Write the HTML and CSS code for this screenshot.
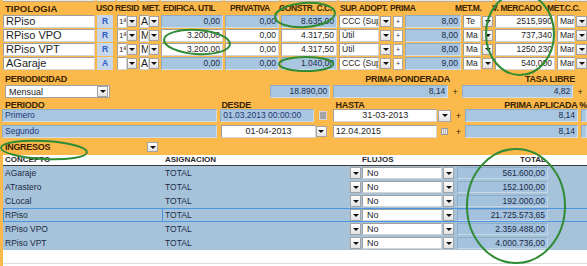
FILE: index.html
```html
<!DOCTYPE html>
<html lang="es">
<head>
    <meta charset="UTF-8">
    <meta name="viewport" content="width=device-width, initial-scale=1.0">
    <title>Tipologías</title>
    <link rel="stylesheet" href="styles.css">
</head>
<body>
<div class="page">
    <div class="top-strip">
        <div></div><div></div><div></div><div></div><div></div><div></div>
        <div></div><div></div><div></div><div></div><div></div><div></div>
    </div>

    <div class="tipo-head">
        <span class="h-tipo">TIPOLOGIA</span>
        <span class="h-uso">USO</span>
        <span class="h-res">RESID</span>
        <span class="h-met">MET.</span>
        <span class="h-edi">EDIFICA. UTIL</span>
        <span class="h-pri">PRIVATIVA</span>
        <span class="h-con">CONSTR. C.C.</span>
        <span class="h-sup">SUP. ADOPT.</span>
        <span class="h-pma">PRIMA</span>
        <span class="h-mm">MET.M.</span>
        <span class="h-vm">V. MERCADO</span>
        <span class="h-mc">MET.C.C.</span>
    </div>

    <div class="tipo-grid">
        <!-- RPiso -->
        <div class="fld white big">RPiso</div>
        <div class="uso">R</div>
        <div class="sel sm"><span class="fld white">1ª</span><span class="btn"></span></div>
        <div class="sel sm"><span class="fld white big">A</span><span class="btn"></span></div>
        <div class="fld blue num">0,00</div>
        <div class="fld blue num">0,00</div>
        <div class="fld blue num">8.635,00</div>
        <div class="sel"><span class="fld white">CCC (Supe</span><span class="btn"></span></div>
        <div class="prima"><span class="plus">+</span><span class="fld blue num">8,00</span></div>
        <div class="sel"><span class="fld white">Te</span><span class="btn"></span></div>
        <div class="fld white num">2515,990</div>
        <div class="sel"><span class="fld white">Manu</span><span class="btn"></span></div>

        <!-- RPiso VPO -->
        <div class="fld white big">RPiso VPO</div>
        <div class="uso">R</div>
        <div class="sel sm"><span class="fld white">1ª</span><span class="btn"></span></div>
        <div class="sel sm"><span class="fld white big">M</span><span class="btn"></span></div>
        <div class="fld white num">3.200,00</div>
        <div class="fld white num">0,00</div>
        <div class="fld white num">4.317,50</div>
        <div class="sel"><span class="fld white">Útil</span><span class="btn"></span></div>
        <div class="prima"><span class="plus">+</span><span class="fld blue num">8,00</span></div>
        <div class="sel"><span class="fld white">Ma</span><span class="btn"></span></div>
        <div class="fld white num">737,340</div>
        <div class="sel"><span class="fld white">Manu</span><span class="btn"></span></div>

        <!-- RPiso VPT -->
        <div class="fld white big">RPiso VPT</div>
        <div class="uso">R</div>
        <div class="sel sm"><span class="fld white">1ª</span><span class="btn"></span></div>
        <div class="sel sm"><span class="fld white big">M</span><span class="btn"></span></div>
        <div class="fld white num">3.200,00</div>
        <div class="fld white num">0,00</div>
        <div class="fld white num">4.317,50</div>
        <div class="sel"><span class="fld white">Útil</span><span class="btn"></span></div>
        <div class="prima"><span class="plus">+</span><span class="fld blue num">8,00</span></div>
        <div class="sel"><span class="fld white">Ma</span><span class="btn"></span></div>
        <div class="fld white num">1250,230</div>
        <div class="sel"><span class="fld white">Manu</span><span class="btn"></span></div>

        <!-- AGaraje -->
        <div class="fld white big">AGaraje</div>
        <div class="uso">A</div>
        <div class="sel sm"><span class="fld white"></span><span class="btn"></span></div>
        <div class="sel sm"><span class="fld white big">A</span><span class="btn"></span></div>
        <div class="fld blue num">0,00</div>
        <div class="fld blue num">0,00</div>
        <div class="fld blue num">1.040,00</div>
        <div class="sel"><span class="fld white">CCC (Supe</span><span class="btn"></span></div>
        <div class="prima"><span class="plus">+</span><span class="fld blue num">9,00</span></div>
        <div class="sel"><span class="fld white">Ma</span><span class="btn"></span></div>
        <div class="fld white num">540,000</div>
        <div class="sel"><span class="fld white">Manu</span><span class="btn"></span></div>
    </div>

    <div class="lbl-row lbl-1">
        <span class="l-per">PERIODICIDAD</span>
        <span class="l-pp">PRIMA PONDERADA</span>
        <span class="l-tl">TASA LIBRE</span>
    </div>
    <div class="form-row row-b">
        <div class="combo mensual"><span>Mensual</span><span class="btn"></span></div>
        <div class="fld blue num w-tot">18.890,00</div>
        <div class="fld blue num w-pp">8,14</div>
        <span class="op">+</span>
        <div class="fld blue num w-tasa">4,82</div>
        <span class="op">+</span>
    </div>

    <div class="lbl-row lbl-2">
        <span class="l-periodo">PERIODO</span>
        <span class="l-desde">DESDE</span>
        <span class="l-hasta">HASTA</span>
        <span class="l-pa">PRIMA APLICADA %</span>
    </div>
    <div class="form-row row-d">
        <div class="fld blue dark w-per">Primero</div>
        <div class="fld blue dark w-desde">01.03.2013 00:00:00</div>
        <span class="chk"></span>
        <div class="fld white center w-hasta">31-03-2013</div>
        <span class="btn big-btn"></span>
        <span class="op">+</span>
        <div class="fld blue num w-tasa">8,14</div>
        <div class="fld blue stub"></div>
    </div>
    <div class="form-row row-e">
        <div class="fld blue dark w-per">Segundo</div>
        <div class="fld white center w-desde2">01-04-2013</div>
        <span class="btn"></span>
        <div class="fld white w-hasta2">12.04.2015</div>
        <span class="cal"></span>
        <span class="op">+</span>
        <div class="fld blue num w-tasa">8,14</div>
        <div class="fld blue stub"></div>
    </div>

    <div class="form-row row-f">
        <span class="l-ing">INGRESOS</span>
        <span class="btn"></span>
    </div>

    <div class="ing-table">
        <div class="ing-grid ing-head">
            <span class="c-con">CONCEPTO</span>
            <span class="c-asig">ASIGNACION</span>
            <span></span>
            <span class="c-flu">FLUJOS</span>
            <span></span>
            <span class="c-tot">TOTAL</span>
            <span></span>
        </div>
        <div class="ing-grid ing-row">
            <span class="c-con">AGaraje</span><span class="c-asig">TOTAL</span>
            <span class="btn"></span><span class="fld white no">No</span><span class="btn"></span>
            <span class="tot">561.600,00</span><span></span>
        </div>
        <div class="ing-grid ing-row">
            <span class="c-con">ATrastero</span><span class="c-asig">TOTAL</span>
            <span class="btn"></span><span class="fld white no">No</span><span class="btn"></span>
            <span class="tot">152.100,00</span><span></span>
        </div>
        <div class="ing-grid ing-row">
            <span class="c-con">CLocal</span><span class="c-asig">TOTAL</span>
            <span class="btn"></span><span class="fld white no">No</span><span class="btn"></span>
            <span class="tot">192.000,00</span><span></span>
        </div>
        <div class="ing-grid ing-row current">
            <span class="c-con">RPiso</span><span class="c-asig">TOTAL</span>
            <span class="btn"></span><span class="fld white no">No</span><span class="btn"></span>
            <span class="tot">21.725.573,65</span><span></span>
        </div>
        <div class="ing-grid ing-row">
            <span class="c-con">RPiso VPO</span><span class="c-asig">TOTAL</span>
            <span class="btn"></span><span class="fld white no">No</span><span class="btn"></span>
            <span class="tot">2.359.488,00</span><span></span>
        </div>
        <div class="ing-grid ing-row">
            <span class="c-con">RPiso VPT</span><span class="c-asig">TOTAL</span>
            <span class="btn"></span><span class="fld white no">No</span><span class="btn"></span>
            <span class="tot">4.000.736,00</span><span></span>
        </div>
        <div class="ing-foot"></div>
    </div>

    <!-- marcas verdes sobre la captura -->
    <svg class="marks" width="587" height="266" viewBox="0 0 587 266">
        <g fill="none" stroke="#2f8b34" stroke-width="2">
            <ellipse cx="305" cy="15" rx="30" ry="12" transform="rotate(-4 305 15)"/>
            <ellipse cx="197" cy="42" rx="33" ry="12" transform="rotate(4 197 42)"/>
            <ellipse cx="306" cy="64" rx="27" ry="7"/>
            <ellipse cx="520" cy="34" rx="34" ry="41"/>
            <ellipse cx="44" cy="150" rx="43" ry="9" transform="rotate(3 44 150)"/>
            <ellipse cx="516" cy="206" rx="49" ry="57"/>
        </g>
    </svg>
</div>
</body>
</html>
```

FILE: styles.css
```css
body {
    margin: 0;
    font-family: "Liberation Sans", Arial, sans-serif;
    font-size: 9px;
    color: #222;
    background: #fbb94c;
}
.page {
    position: relative;
    width: 587px;
    height: 266px;
    overflow: hidden;
}

/* tabla de tipologias */
.top-strip, .tipo-grid {
    display: grid;
    grid-template-columns: 92px 18px 20px 20px 62px 54px 56px 52px 68px 30px 60px 30px;
    column-gap: 2px;
    padding-left: 3px;
}
.top-strip {
    height: 2px;
}
.top-strip div {
    box-sizing: border-box;
    background: #eee8dc;
    border-bottom: 1px solid #b7ab93;
}
.tipo-head {
    display: flex;
    height: 12px;
    margin-bottom: 1px;
    align-items: flex-end;
    font-weight: bold;
    font-size: 8.5px;
    letter-spacing: -0.4px;
    color: #3a2300;
    white-space: nowrap;
}
.tipo-head span {
    display: block;
    box-sizing: border-box;
    line-height: 11px;
}
.h-tipo { width: 96px; padding-left: 5px; letter-spacing: 0; font-size: 9.5px; }
.h-uso { width: 19px; }
.h-res { width: 27px; }
.h-met { width: 21px; }
.h-edi { width: 67px; }
.h-pri { width: 49px; }
.h-con { width: 61px; }
.h-sup { width: 50px; }
.h-pma { width: 65px; }
.h-mm { width: 37px; }
.h-vm { width: 55px; }
.h-mc { width: 37px; }

.tipo-grid {
    row-gap: 1px;
    grid-auto-rows: 13px;
}

.fld {
    display: block;
    box-sizing: border-box;
    height: 13px;
    border: 1px solid;
    padding: 0 2px;
    font-size: 8.5px;
    line-height: 11px;
    overflow: hidden;
    white-space: nowrap;
}
.fld.white {
    background: #fff;
    border-color: #9f9f9f #d4d4d4 #d4d4d4 #9f9f9f;
    color: #1e1e1e;
}
.fld.blue {
    background: #a9c6e0;
    border-color: #8eaac4 #d0dce8 #d0dce8 #8eaac4;
    color: #1c2a48;
}
.fld.big {
    font-size: 11px;
    padding-left: 2px;
}
.num {
    text-align: right;
}
.center {
    text-align: center;
}
.uso {
    background: #c7d6e9;
    color: #2b5fc8;
    font-weight: bold;
    font-size: 8.5px;
    line-height: 13px;
    text-align: center;
    margin-right: 2px;
}
.sel {
    display: flex;
    align-items: center;
    gap: 1px;
}
.sel .fld {
    flex: 1;
    min-width: 0;
}
.sel.sm {
    gap: 0;
}
.sel.sm .fld {
    padding: 0 0 0 1px;
    font-size: 8px;
}
.sel.sm .fld.big {
    font-size: 10.5px;
}
.sel.sm .btn {
    width: 10px;
}
.btn {
    box-sizing: border-box;
    flex: none;
    display: flex;
    align-items: center;
    justify-content: center;
    width: 11px;
    height: 11px;
    background: linear-gradient(#ffffff, #e2e2e2);
    border: 1px solid #a3a3a3;
}
.btn::after {
    content: "";
    border-left: 3px solid transparent;
    border-right: 3px solid transparent;
    border-top: 3px solid #111;
}
.prima {
    display: flex;
    align-items: center;
    gap: 2px;
}
.prima .fld {
    flex: 1;
}
.plus {
    box-sizing: border-box;
    width: 10px;
    height: 12px;
    background: #fff;
    border: 1px solid #a8a8a8;
    font-size: 7px;
    line-height: 10px;
    text-align: center;
    color: #333;
}

/* periodicidad y periodos */
.lbl-row {
    display: flex;
    font-weight: bold;
    font-size: 9px;
    letter-spacing: -0.3px;
    color: #3a2300;
    white-space: nowrap;
}
.lbl-row span {
    display: block;
    box-sizing: border-box;
}
.lbl-1 {
    margin-top: 3px;
    height: 11px;
    line-height: 13px;
}
.l-per { width: 200px; padding-left: 5px; }
.l-pp { width: 250px; text-align: right; }
.l-tl { width: 125px; text-align: right; }

.form-row {
    display: flex;
    align-items: center;
    height: 13px;
}
.row-b {
    margin-top: 1px;
}
.combo {
    box-sizing: border-box;
    display: flex;
    align-items: center;
    justify-content: space-between;
    height: 13px;
    padding: 0 1px 0 3px;
    background: #fff;
    border: 1px solid #9f9f9f;
    font-size: 9px;
    color: #222;
}
.mensual {
    margin-left: 5px;
    width: 107px;
}
.w-tot { margin-left: 160px; width: 61px; }
.w-pp { margin-left: 3px; width: 117px; }
.w-tasa { width: 113px; }
.op {
    width: 14px;
    text-align: center;
    font-size: 9px;
    color: #3a2300;
}

.lbl-2 {
    height: 10px;
    line-height: 12px;
    margin-top: 1px;
}
.l-periodo { width: 223px; padding-left: 5px; }
.l-desde { width: 115px; }
.l-hasta { width: 170px; }
.l-pa { flex: 1; }

.fld.dark {
    color: #1d3574;
    font-size: 8.5px;
}
.w-per { margin-left: 2px; width: 216px; }
.w-desde { margin-left: 3px; width: 94px; }
.chk {
    margin-left: 5px;
    width: 8px;
    height: 9px;
    background: #a3a3a8;
    border: 1px solid #d8d8d8;
    box-sizing: border-box;
}
.w-hasta { margin-left: 6px; width: 105px; font-size: 9px; }
.big-btn {
    margin-left: 1px;
    width: 13px;
    height: 12px;
}
.stub {
    margin-left: 3px;
    width: 4px;
}
.row-e {
    margin-top: 3px;
}
.w-desde2 { margin-left: 4px; width: 95px; font-size: 9px; }
.w-hasta2 { margin-left: 6px; width: 105px; font-size: 9px; }
.cal {
    box-sizing: border-box;
    margin: 0 3px 0 4px;
    width: 7px;
    height: 7px;
    border: 1px solid #9a9a9a;
    background: repeating-linear-gradient(90deg, #e8e8e8 0 1px, #b8b8b8 1px 2px);
}

.row-f {
    margin-top: 2px;
    height: 14px;
}
.l-ing {
    box-sizing: border-box;
    width: 147px;
    padding-left: 5px;
    font-weight: bold;
    font-size: 9px;
    letter-spacing: -0.3px;
    color: #3a2300;
}
.row-f .btn {
    width: 11px;
    height: 10px;
}

/* tabla de ingresos */
.ing-table {
    margin-left: 3px;
    margin-top: 1px;
    background: #fff;
    height: 111px;
}
.ing-grid {
    display: grid;
    grid-template-columns: 160px 187px 12px 81px 13px 92px 1fr;
    align-items: center;
}
.ing-head {
    height: 10px;
    border-bottom: 1px solid #3a3a3a;
    font-weight: bold;
    font-size: 8px;
    color: #2a2a2a;
    line-height: 10px;
}
.c-con, .c-asig {
    padding-left: 2px;
    white-space: nowrap;
}
.c-tot {
    text-align: right;
    padding-right: 2px;
}
.ing-row {
    height: 14px;
    background: #a7c3da;
    font-size: 8.5px;
    color: #1b2a44;
}
.ing-row .c-con, .ing-row .c-asig {
    line-height: 14px;
    height: 14px;
    box-sizing: border-box;
}
.ing-row .no {
    height: 12px;
    line-height: 10px;
    margin-right: 1px;
    font-size: 9px;
    padding-left: 4px;
}
.ing-row .btn {
    width: 11px;
    height: 12px;
}
.tot {
    box-sizing: border-box;
    margin-left: 1px;
    height: 12px;
    line-height: 10px;
    padding-right: 2px;
    text-align: right;
    background: #a4c2de;
    border: 1px solid #c5d7e7;
    border-left-color: #8cacc8;
    border-top-color: #8cacc8;
}
.ing-row.current {
    box-shadow: inset 0 1px 0 #4b94e4, inset 0 -1px 0 #4b94e4;
}
.ing-row.current .c-con {
    box-shadow: inset 0 0 0 1px #4b94e4;
}
.ing-foot {
    height: 13px;
    border-bottom: 1px solid #dcdcdc;
}

.marks {
    position: absolute;
    top: 0;
    left: 0;
    pointer-events: none;
}
```
